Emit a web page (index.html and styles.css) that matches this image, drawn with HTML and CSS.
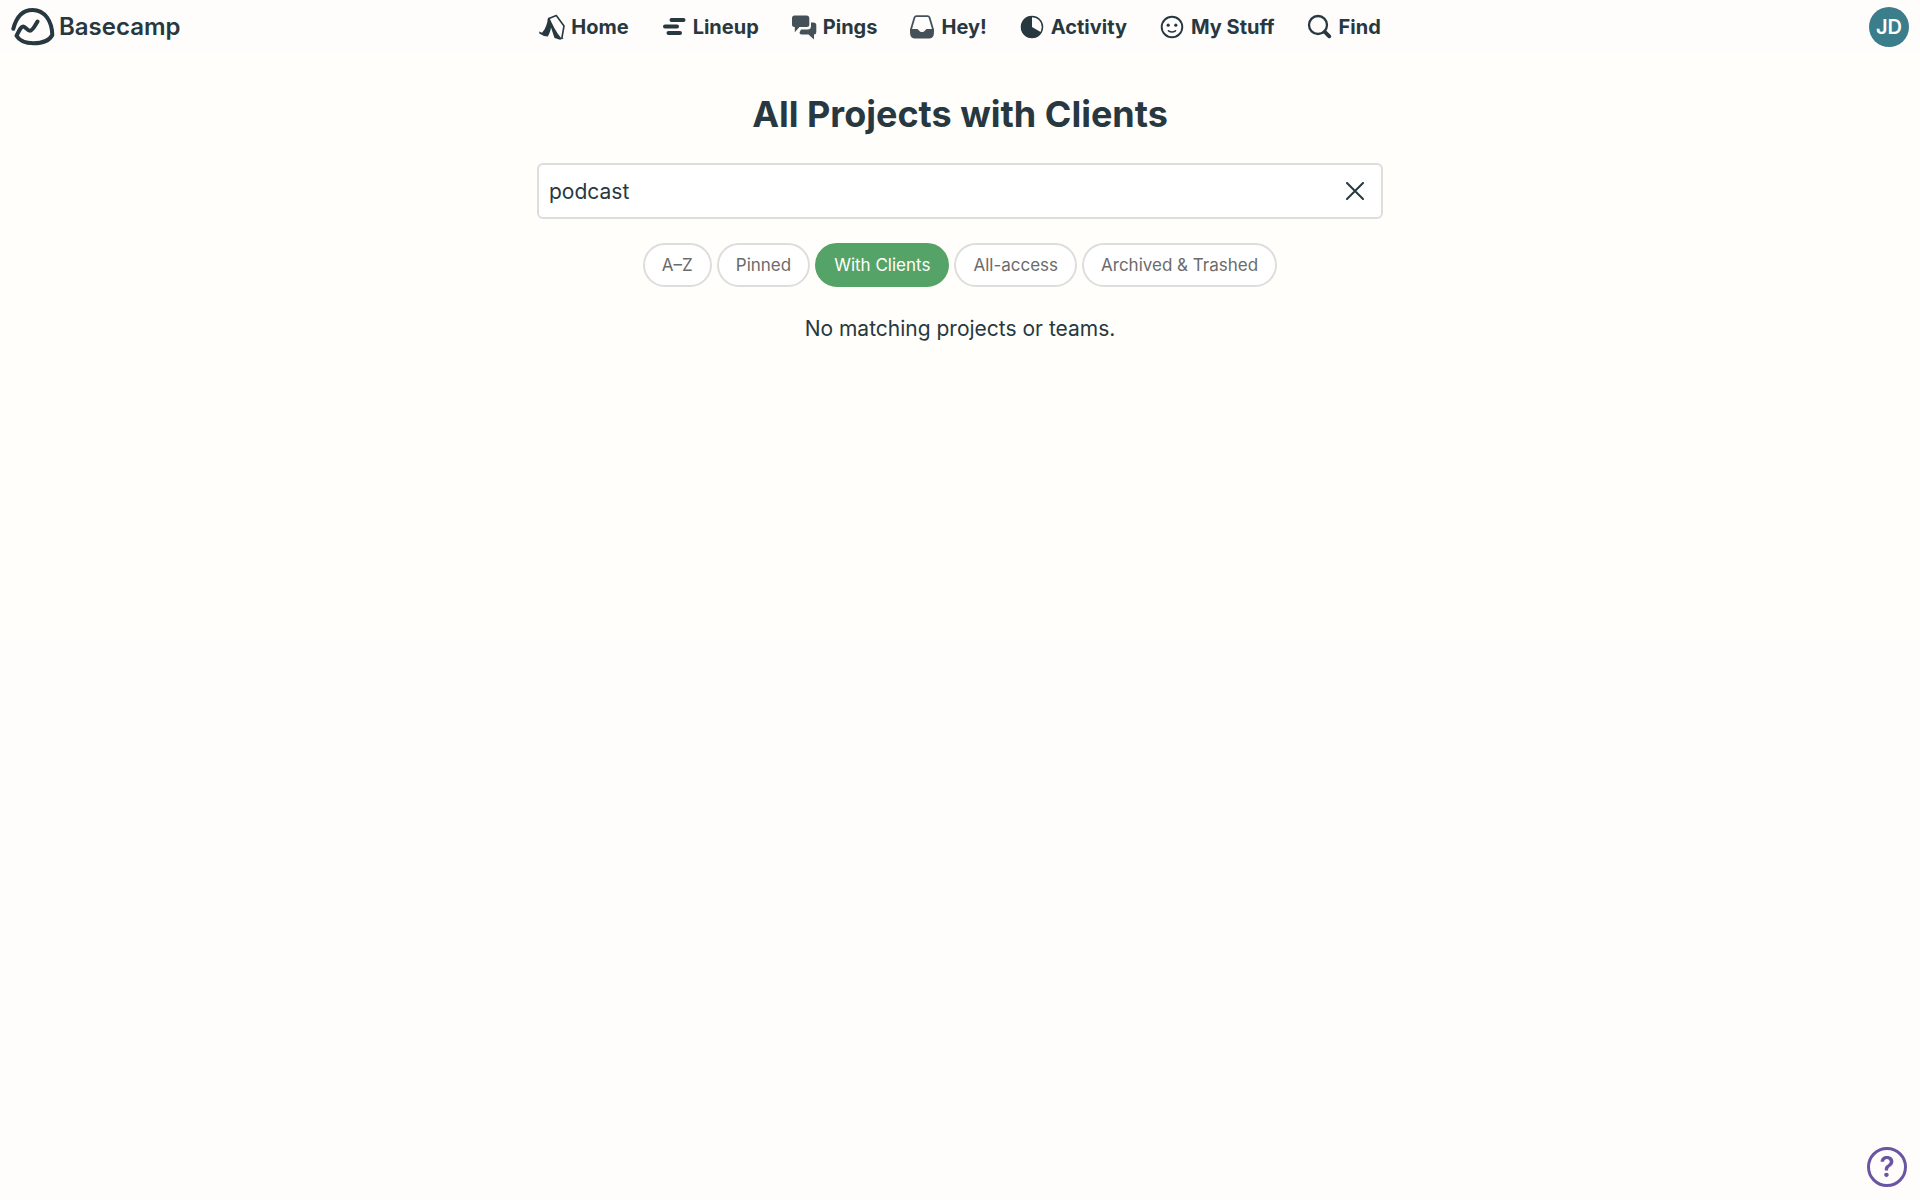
FILE: index.html
```html
<!DOCTYPE html>
<html lang="en">
<head>
<meta charset="utf-8">
<meta name="viewport" content="width=device-width, initial-scale=1">
<title>All Projects with Clients</title>
<link rel="stylesheet" href="styles.css">
</head>
<body>
<header class="topbar">
  <a class="brand" href="#">
    <svg class="brand-mark" viewBox="0 0 44 38" fill="none" stroke="currentColor" stroke-width="4" stroke-linecap="round" stroke-linejoin="round" aria-hidden="true"><path d="M2.3 20.8C5.5 8.500 12 2 21.500 2C34 2 41 13.500 41.300 27C38.500 32.500 31 35.200 22.500 35.200C14.500 35.200 8.500 33 5.500 27.800C8.200 22.500 10 18.500 12.200 18.500C14.500 18.500 16.500 22.800 19 22.800C21.500 22.800 24.500 17 26.500 13.500"/></svg>
    <span>Basecamp</span>
  </a>
  <nav class="nav" aria-label="Main">
    <a class="nav-link" href="#">
      <svg class="icon" viewBox="0 0 26 26" aria-hidden="true"><path fill="currentColor" d="M10.300 3.500C13 10 17 18 22.500 24.500L23.500 23.500L24.500 24.500L21 25.800L15.500 24L12 13.500C11.500 17 10.500 19.500 8.800 22.500L5 22L0.300 19.500V17.500L3 18.800C6.500 15 8.500 9.500 8.800 4.500Z"/><path fill="none" stroke="currentColor" stroke-width="1.600" stroke-linejoin="round" d="M9.300 4.800L17.300 1.500L25 12L22.800 24.500"/></svg>
      <span>Home</span>
    </a>
    <a class="nav-link" href="#">
      <svg class="icon" viewBox="0 0 26 26" fill="none" stroke="currentColor" stroke-width="4" stroke-linecap="round" aria-hidden="true"><path d="M10.500 6H22.500M4 12.500H16M7.500 19H19"/></svg>
      <span>Lineup</span>
    </a>
    <a class="nav-link nav-link-soft" href="#">
      <svg class="icon" viewBox="0 0 26 26" fill="currentColor" aria-hidden="true"><path d="M3.500 1.500H15.500Q18.300 1.500 18.300 4.500V10.500Q18.300 13 15.500 13H8.500L3.800 18.300V13H3.500Q1 13 1 10.500V4.500Q1 1.500 3.500 1.500Z"/><path d="M20 8.500H22.300Q25.300 8.500 25.300 11V18Q25.300 20.500 23 20.500V25.500L17.500 20.500H10.500Q8.500 20.500 8.500 18.500L10 15.500H16.500Q20 15.500 20 12Z"/></svg>
      <span>Pings</span>
    </a>
    <a class="nav-link nav-link-soft" href="#">
      <svg class="icon" viewBox="0 0 26 26" aria-hidden="true"><path fill="none" stroke="currentColor" stroke-width="1.800" stroke-linejoin="round" d="M1.800 16L5.500 3.500Q6 2.200 7.500 2.200H18.500Q20 2.200 20.500 3.500L24.200 16"/><path fill="currentColor" d="M1 15H8.500L10 16.500Q11 18 13 18T16 16.500L17.500 15H25V18Q25 24.500 20.500 24.500H5.500Q1 24.500 1 18Z"/></svg>
      <span>Hey!</span>
    </a>
    <a class="nav-link" href="#">
      <svg class="icon" viewBox="0 0 26 26" aria-hidden="true"><circle cx="13" cy="13" r="10.500" fill="none" stroke="currentColor" stroke-width="1.500"/><path fill="currentColor" d="M13 2V13L22.500 18.500A11 11 0 1 1 13 2Z"/></svg>
      <span>Activity</span>
    </a>
    <a class="nav-link" href="#">
      <svg class="icon" viewBox="0 0 26 26" aria-hidden="true"><circle cx="13" cy="13" r="10.300" fill="none" stroke="currentColor" stroke-width="1.900"/><circle cx="9.200" cy="11.200" r="1.600" fill="currentColor"/><circle cx="16.800" cy="11.200" r="1.600" fill="currentColor"/><path d="M9.500 16.800Q13 19.300 16.500 16.800" fill="none" stroke="currentColor" stroke-width="1.600" stroke-linecap="round"/></svg>
      <span>My Stuff</span>
    </a>
    <a class="nav-link" href="#">
      <svg class="icon" viewBox="0 0 26 26" fill="none" stroke="currentColor" stroke-linecap="round" aria-hidden="true"><circle cx="11" cy="11" r="9" stroke-width="2.300"/><path d="M17.800 17.800L22.300 22.300" stroke-width="3.800"/></svg>
      <span>Find</span>
    </a>
  </nav>
  <button class="avatar" type="button" aria-label="Account">JD</button>
</header>
<main class="main">
  <h1 class="title">All Projects with Clients</h1>
  <form class="search">
    <input class="search-input" type="text" value="podcast" aria-label="Find a project">
    <button class="search-clear" type="reset" aria-label="Clear">
      <svg class="clear-icon" viewBox="0 0 18 18" fill="none" stroke="currentColor" stroke-width="2" stroke-linecap="round" aria-hidden="true"><path d="M1 1L17 17M17 1L1 17"/></svg>
    </button>
  </form>
  <div class="filters">
    <button class="pill" type="button">A–Z</button>
    <button class="pill" type="button">Pinned</button>
    <button class="pill pill-active" type="button" aria-pressed="true">With Clients</button>
    <button class="pill" type="button">All-access</button>
    <button class="pill" type="button">Archived &amp; Trashed</button>
  </div>
  <p class="empty">No matching projects or teams.</p>
</main>
<button class="help" type="button" aria-label="Help">?</button>
</body>
</html>
```
FILE: styles.css
```css
* {
  box-sizing: border-box;
}

body {
  margin: 0;
  min-height: 100vh;
  background: #fefdfb;
  color: #283840;
  font-family: Inter, "Liberation Sans", sans-serif;
}

button,
input {
  font: inherit;
  color: inherit;
}

.topbar {
  display: grid;
  grid-template-columns: 1fr auto 1fr;
  align-items: center;
  height: 54px;
  padding: 0 11px;
}

.brand {
  display: flex;
  align-items: center;
  gap: 4px;
  justify-self: start;
  color: #283840;
  font-size: 24px;
  font-weight: 600;
  line-height: 32px;
  text-decoration: none;
}

.brand-mark {
  width: 44px;
  height: 38px;
}

.nav {
  display: flex;
  gap: 32px;
}

.nav-link {
  display: flex;
  align-items: center;
  gap: 6px;
  color: #283840;
  font-size: 20px;
  font-weight: 700;
  line-height: 26px;
  text-decoration: none;
}

.icon {
  width: 26px;
  height: 26px;
}

.nav-link-soft .icon {
  color: #455159;
}

.avatar {
  justify-self: end;
  width: 40px;
  height: 40px;
  padding: 0;
  border: 0;
  border-radius: 50%;
  background: #3b7d8a;
  color: #fff;
  font-size: 20px;
  font-weight: 600;
}

.main {
  display: flex;
  flex-direction: column;
  align-items: center;
  min-height: 586px;
  padding: 36px 24px;
  background: #fffefa;
}

.title {
  margin: 0 0 25px;
  font-size: 36px;
  font-weight: 700;
  line-height: 48px;
}

.search {
  display: flex;
  align-items: center;
  width: 100%;
  max-width: 846px;
  height: 56px;
  margin-bottom: 24px;
  padding-right: 17px;
  border: 2px solid #dddddc;
  border-radius: 6px;
  background: #fff;
}

.search-input {
  flex: 1;
  min-width: 0;
  height: 100%;
  padding: 0 10px;
  border: 0;
  outline: 0;
  background: transparent;
  font-size: 21px;
}

.search-clear {
  display: flex;
  padding: 0;
  border: 0;
  background: none;
}

.clear-icon {
  width: 18px;
  height: 18px;
}

.filters {
  display: flex;
  flex-wrap: wrap;
  justify-content: center;
  gap: 5px;
  margin-bottom: 26px;
}

.pill {
  height: 44px;
  padding: 0 17px;
  border: 2px solid #dddddc;
  border-radius: 22px;
  background: #fff;
  color: #6b6b6b;
  font-size: 17px;
}

.pill-active {
  border-color: #55a367;
  background: #55a367;
  color: #fff;
}

.empty {
  margin: 0;
  font-size: 21px;
  line-height: 32px;
}

.help {
  position: fixed;
  right: 13px;
  bottom: 13px;
  width: 40px;
  height: 40px;
  padding: 0;
  border: 3px solid #6a55a4;
  border-radius: 50%;
  background: #fefdfb;
  color: #6a55a4;
  font-size: 28px;
  font-weight: 600;
  line-height: 34px;
}
```
